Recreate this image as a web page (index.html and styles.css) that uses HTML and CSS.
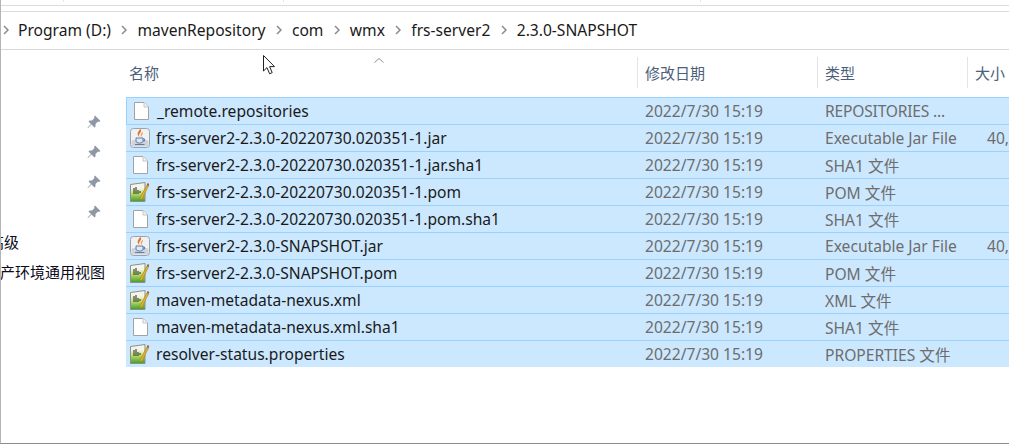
FILE: index.html
```html
<!DOCTYPE html>
<html lang="zh">
<head>
<meta charset="utf-8">
<title>2.3.0-SNAPSHOT</title>
<link rel="stylesheet" href="styles.css">
</head>
<body>
<svg width="0" height="0" class="defs">
  <defs>
    <linearGradient id="pomfill" x1="0" y1="0" x2="0" y2="1">
      <stop offset="0.3" stop-color="#f3f5ea"/>
      <stop offset="0.55" stop-color="#c4df70"/>
      <stop offset="1" stop-color="#3f9f2a"/>
    </linearGradient>
    <symbol id="blank" viewBox="0 0 16 18">
      <path d="M1.5.5H11L15.5 5V17.5H1.5Z" fill="#fff" stroke="#a3a3a3"/>
      <path d="M11 .5V5H15.5" fill="#f4f4f4" stroke="#c4c4c4"/>
    </symbol>
    <symbol id="jar" viewBox="0 0 20 20">
      <rect x=".5" y=".5" width="19" height="19" rx="3" fill="#f0f1f3" stroke="#9aa3ad"/>
      <rect x="1.5" y="12" width="17" height="6.5" rx="2" fill="#cfd4db"/>
      <path d="M10.5 1C13 4 7.5 5.5 9.5 9C6.5 6.5 7.5 4 10.5 1Z" fill="#e4702a"/>
      <path d="M12.8 4C13.5 6 11 7 11.7 9C10 7.5 11 5.2 12.8 4Z" fill="#ee9a3c"/>
      <path d="M6 10H13V13C13 14.4 11.5 15 9.5 15S6 14.4 6 13Z" fill="#dfe7f0" stroke="#5a7ea8"/>
      <path d="M13 11H14.6V13H13M5 16.5H14.5" fill="none" stroke="#5a7ea8"/>
    </symbol>
    <symbol id="pom" viewBox="0 0 20 20">
      <path d="M.5 2.5L15 .5V19.5H.5Z" fill="url(#pomfill)" stroke="#8c9088"/>
      <path d="M4 6V12M6 5V12M8 8V12M10 9V11" stroke="#333a30" stroke-width="1.1"/>
      <path d="M10 16L17 3L18.5 4L12 17L10 18Z" fill="#e6b52a" stroke="#9a6f18" stroke-width=".5"/>
      <path d="M17 3L17.6 1L19.2 2L18.5 4Z" fill="#b4452a"/>
    </symbol>
    <symbol id="pin" viewBox="0 0 14 14">
      <path d="M8 .5L13.5 6L12 7L11 6.5L8.5 9L8.5 11.5L7.5 12.5L4.5 9.5L1 13L.5 12.5L4 9L1.5 6.5L2.5 5.5L5 5.5L7.5 3L7 2Z" fill="#8d98a3"/>
    </symbol>
    <symbol id="crumb" viewBox="0 0 6 10">
      <path d="M1 1L5 5L1 9" fill="none" stroke="#8a8a8a" stroke-width="1.5"/>
    </symbol>
  </defs>
</svg>
<div class="window">
  <div class="ribbon">
    <span class="tick tick-a"></span>
    <span class="tick tick-b"></span>
    <span class="tick tick-c"></span>
  </div>
  <nav class="address">
    <svg class="sep first"><use href="#crumb"/></svg><span>Program (D:)</span>
    <svg class="sep"><use href="#crumb"/></svg><span>mavenRepository</span>
    <svg class="sep"><use href="#crumb"/></svg><span>com</span>
    <svg class="sep"><use href="#crumb"/></svg><span>wmx</span>
    <svg class="sep"><use href="#crumb"/></svg><span>frs-server2</span>
    <svg class="sep"><use href="#crumb"/></svg><span>2.3.0-SNAPSHOT</span>
  </nav>
  <div class="body">
    <aside class="side">
      <div class="pins">
        <svg class="pin"><use href="#pin"/></svg>
        <svg class="pin"><use href="#pin"/></svg>
        <svg class="pin"><use href="#pin"/></svg>
        <svg class="pin"><use href="#pin"/></svg>
      </div>
      <div class="link link-clip">高级</div>
      <div class="link">产环境通用视图</div>
    </aside>
    <section class="list">
      <header class="head">
        <div class="hc c-name">名称<svg class="sort" viewBox="0 0 10 5"><path d="M.5 4.5L5 .5L9.5 4.5" fill="none" stroke="#8f8f8f"/></svg></div>
        <div class="hc c-date">修改日期</div>
        <div class="hc c-type">类型</div>
        <div class="hc c-size">大小</div>
      </header>
      <div class="rows">
        <div class="row"><div class="c-name cell"><svg class="ic ic-blank"><use href="#blank"/></svg>_remote.repositories</div><div class="c-date cell dim">2022/7/30 15:19</div><div class="c-type cell dim">REPOSITORIES ...</div><div class="c-size cell dim"></div></div>
        <div class="row"><div class="c-name cell"><svg class="ic"><use href="#jar"/></svg>frs-server2-2.3.0-20220730.020351-1.jar</div><div class="c-date cell dim">2022/7/30 15:19</div><div class="c-type cell dim">Executable Jar File</div><div class="c-size cell dim">40,</div></div>
        <div class="row"><div class="c-name cell"><svg class="ic ic-blank"><use href="#blank"/></svg>frs-server2-2.3.0-20220730.020351-1.jar.sha1</div><div class="c-date cell dim">2022/7/30 15:19</div><div class="c-type cell dim">SHA1 文件</div><div class="c-size cell dim"></div></div>
        <div class="row"><div class="c-name cell"><svg class="ic"><use href="#pom"/></svg>frs-server2-2.3.0-20220730.020351-1.pom</div><div class="c-date cell dim">2022/7/30 15:19</div><div class="c-type cell dim">POM 文件</div><div class="c-size cell dim"></div></div>
        <div class="row"><div class="c-name cell"><svg class="ic ic-blank"><use href="#blank"/></svg>frs-server2-2.3.0-20220730.020351-1.pom.sha1</div><div class="c-date cell dim">2022/7/30 15:19</div><div class="c-type cell dim">SHA1 文件</div><div class="c-size cell dim"></div></div>
        <div class="row"><div class="c-name cell"><svg class="ic"><use href="#jar"/></svg>frs-server2-2.3.0-SNAPSHOT.jar</div><div class="c-date cell dim">2022/7/30 15:19</div><div class="c-type cell dim">Executable Jar File</div><div class="c-size cell dim">40,</div></div>
        <div class="row"><div class="c-name cell"><svg class="ic"><use href="#pom"/></svg>frs-server2-2.3.0-SNAPSHOT.pom</div><div class="c-date cell dim">2022/7/30 15:19</div><div class="c-type cell dim">POM 文件</div><div class="c-size cell dim"></div></div>
        <div class="row"><div class="c-name cell"><svg class="ic"><use href="#pom"/></svg>maven-metadata-nexus.xml</div><div class="c-date cell dim">2022/7/30 15:19</div><div class="c-type cell dim">XML 文件</div><div class="c-size cell dim"></div></div>
        <div class="row"><div class="c-name cell"><svg class="ic ic-blank"><use href="#blank"/></svg>maven-metadata-nexus.xml.sha1</div><div class="c-date cell dim">2022/7/30 15:19</div><div class="c-type cell dim">SHA1 文件</div><div class="c-size cell dim"></div></div>
        <div class="row"><div class="c-name cell"><svg class="ic"><use href="#pom"/></svg>resolver-status.properties</div><div class="c-date cell dim">2022/7/30 15:19</div><div class="c-type cell dim">PROPERTIES 文件</div><div class="c-size cell dim"></div></div>
      </div>
    </section>
  </div>
  <svg class="cursor" viewBox="0 0 13 20"><path d="M.5.5V16L4 12.6L6.6 18.8L9.2 17.6L6.6 11.6H11.5Z" fill="#fff" stroke="#222"/></svg>
</div>
</body>
</html>
```
FILE: styles.css
```css
* { box-sizing: border-box; }
html, body { margin: 0; height: 100%; overflow: hidden; background: #fff; }
.defs { position: absolute; }
.window {
  position: relative;
  width: 1009px;
  height: 444px;
  display: flex;
  flex-direction: column;
  border-left: 1px solid #b4b4b4;
  border-bottom: 1px solid #8c8c8c;
  font-family: "Noto Sans", "Noto Sans CJK SC", sans-serif;
  color: #1a1a1a;
  overflow: hidden;
}
.ribbon {
  position: relative;
  height: 6px;
  border-bottom: 1px solid #dcdcdc;
  flex: none;
}
.tick { position: absolute; top: 0; height: 2px; width: 1px; background: #e4e4e4; }
.tick-a { left: 62px; }
.tick-b { left: 282px; }
.tick-c { left: 699px; }
.address {
  flex: none;
  height: 39px;
  margin-top: 5px;
  border-top: 1px solid #dcdcdc;
  border-bottom: 1px solid #d9d9d9;
  display: flex;
  align-items: center;
  font-size: 15.6px;
  padding: 0 0 1px 1px;
}
.sep { width: 6px; height: 10px; flex: none; margin: 0 10.2px; }
.sep.first { margin: 0 9px 0 1px; }
.body { flex: 1; display: flex; min-height: 0; }
.side {
  width: 125px;
  flex: none;
  display: flex;
  flex-direction: column;
  overflow: hidden;
  font-size: 15px;
  color: #0a0a20;
}
.pins {
  display: flex;
  flex-direction: column;
  align-items: flex-end;
  gap: 16px;
  margin-top: 65px;
  margin-right: 25px;
}
.pin { width: 14px; height: 14px; display: block; }
.link { white-space: nowrap; height: 20px; line-height: 20px; flex: none; margin-left: -1px; }
.link-clip { margin-left: -12px; margin-top: 13px; }
.link-clip + .link { margin-top: 10px; }
.list { flex: 1; min-width: 0; display: flex; flex-direction: column; }
.head {
  flex: none;
  height: 47px;
  display: flex;
  padding-top: 7px;
  padding-bottom: 9px;
  font-size: 15px;
  color: #4c607a;
}
.hc {
  position: relative;
  display: flex;
  align-items: center;
  padding-left: 7px;
  border-right: 1px solid #e4e4e4;
}
.head .c-name { padding-left: 3px; }
.head .c-size { border-right: 0; }
.sort { position: absolute; left: 248px; top: 1px; width: 10px; height: 5px; }
.c-name { width: 512px; flex: none; }
.c-date { width: 180px; flex: none; }
.c-type { width: 150px; flex: none; }
.c-size { flex: 1; min-width: 0; }
.row {
  height: 27px;
  display: flex;
  align-items: center;
  background: #cce8ff;
  border-top: 1px solid #99d1ff;
  font-size: 15.6px;
  white-space: nowrap;
  overflow: hidden;
}
.row:first-child { border: 1px solid #99d1ff; border-right: 0; height: 28px; margin-bottom: -1px; }
.cell { display: flex; align-items: center; }
.row .c-name { padding-left: 4px; }
.row .c-date { padding-left: 7px; }
.row .c-type { padding-left: 7px; }
.row .c-size { padding-left: 19px; }
.row:first-child .c-date, .row:first-child .c-type { padding-left: 6px; }
.row:first-child .c-type { letter-spacing: -0.2px; }
.dim { color: #6d6d6d; }
.ic { width: 20px; height: 20px; flex: none; margin-right: 6px; }
.ic-blank { width: 16px; height: 18px; margin: 0 8px 0 2px; }
.cursor { position: absolute; left: 262px; top: 55px; width: 13px; height: 20px; }
```
